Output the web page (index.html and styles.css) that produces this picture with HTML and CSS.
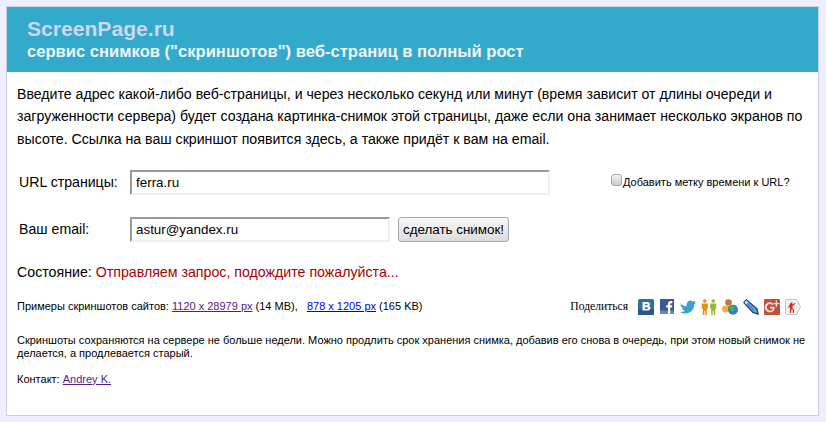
FILE: index.html
```html
<!DOCTYPE html>
<html lang="ru">
<head>
<meta charset="utf-8">
<title>ScreenPage.ru</title>
<link rel="stylesheet" href="styles.css">
</head>
<body>
<main class="card">
  <header class="head">
    <h1 class="logo">ScreenPage.ru</h1>
    <h2 class="tagline">сервис снимков ("скриншотов") веб-страниц в полный рост</h2>
  </header>
  <div class="content">
    <p class="intro">Введите адрес какой-либо веб-страницы, и через несколько секунд или минут (время зависит от длины очереди и загруженности сервера) будет создана картинка-снимок этой страницы, даже если она занимает несколько экранов по высоте. Ссылка на ваш скриншот появится здесь, а также придёт к вам на email.</p>
    <form class="form">
      <div class="row row-url">
        <label class="label" for="url">URL страницы:</label>
        <input class="field field-url" id="url" type="text" value="ferra.ru">
        <label class="stamp"><input class="check" type="checkbox">Добавить метку времени к URL?</label>
      </div>
      <div class="row row-mail">
        <label class="label" for="mail">Ваш email:</label>
        <input class="field field-mail" id="mail" type="text" value="astur@yandex.ru">
        <button class="submit" type="button">сделать снимок!</button>
      </div>
    </form>
    <p class="status">Состояние: <span class="status-msg">Отправляем запрос, подождите пожалуйста...</span></p>
    <div class="examples">
      <p class="small">Примеры скриншотов сайтов: <a class="visited" href="#a">1120 x 28979 px</a> (14 MB), &nbsp; <a class="link" href="#b">878 x 1205 px</a> (165 KB)</p>
      <div class="share">
        <span class="share-label">Поделиться</span>
        <svg class="ic" viewBox="0 0 16 16"><rect width="16" height="16" rx="1.5" fill="#336f9f"/><rect y="10" width="16" height="6" fill="#275a86"/><path d="M4.500 3h5.200C11.300 3 12 4 12 5.200c0 .9-.4 1.500-1 1.800.9.300 1.500 1 1.500 2.100 0 1.500-1 2.400-2.600 2.400H4.500zM7 5v1.300h1.800c.5 0 .8-.2.8-.7S9.300 5 8.800 5zM7 8.200V10h2c.6 0 .9-.3.9-.9s-.3-.9-.9-.9z" fill="#f4f7fa" fill-rule="evenodd"/></svg>
        <svg class="ic" viewBox="0 0 14 16"><rect width="14" height="15" fill="#3b5998"/><rect y="11.500" width="14" height="3.500" fill="#6d84b4"/><path d="M8 15V8.500H6.200V6.200H8V4.800c0-1.900 1.100-2.800 2.800-2.800h1.500v2.300h-1.100c-.8 0-1 .4-1 1v.900h2.100l-.3 2.300h-1.800V15z" fill="#fff"/></svg>
        <svg class="ic" viewBox="0 0 16 16"><path d="M0 4c1.800 2 3.700 3 6.500 3.200C6.400 4 8.200 1.500 10.500 1.500c1 0 1.800.4 2.400 1L15.500 2l-1 2 1.500-.2-1.800 1.900C14 10.500 10.500 14.500 5.500 14.500c-2 0-3.800-.5-5.300-1.500 1.900.1 3.400-.4 4.700-1.600-1.500-.1-2.600-1-3-2.200h1.600C1.500 8.400.5 7.200.5 5.800l1.700.5C.8 5.500.4 5 0 4z" fill="#3f9fd0"/></svg>
        <svg class="ic" viewBox="0 0 16 16"><g fill="#f28c0f"><circle cx="3.800" cy="2" r="1.800"/><path d="M.8 4.500h6v5.200h-1V16H4.300v-4H3.300v4H1.800V9.700H.8z"/></g><g fill="#96b82b"><circle cx="12.200" cy="2" r="1.800"/><path d="M9.200 4.500h6v5.200h-1V16h-1.500v-4h-1v4h-1.500V9.700h-1z"/></g></svg>
        <svg class="ic" viewBox="0 0 16 16"><circle cx="6.500" cy="3.500" r="3.300" fill="#b9793f"/><path d="M2.500 7h8l1 3h-9z" fill="#e8a23a"/><circle cx="3.500" cy="10" r="3.500" fill="#f2b03c"/><circle cx="11" cy="10.700" r="5" fill="#2d7fd0"/><path d="M8 8c1.500-1.500 4-1 4.500.5s-1 4-2.500 4S7 9.500 8 8z" fill="#4db33d"/></svg>
        <svg class="ic" viewBox="0 0 16 16"><path d="M3.500 0 0 3.500 9.500 14 16 16l-1.500-6.500z" fill="#123f6d"/><path d="M3.500 1.500 1.500 3.500l8.800 9.500 3.900 1-1-3.900z" fill="#6da3d8"/><path d="M3.500 1.500 1.500 3.500l1.700 1.800 2-2z" fill="#d6e4f3"/><path d="M4.500 4.500 11.500 12" stroke="#2f6aa5" fill="none"/></svg>
        <svg class="ic" viewBox="0 0 16 16"><rect width="16" height="16" rx="1" fill="#c0503c"/><path transform="translate(-.6 -.9) scale(1.320)" d="M7.600 4.500 6.800 5.300C6.300 4.800 5.700 4.500 5 4.500c-1.400 0-2.400 1.100-2.400 2.500S3.600 9.500 5 9.500c1.200 0 2-.6 2.200-1.700H5V6.600h3.500c.3 2-.8 4.200-3.500 4.200C2.800 10.800 1 9.100 1 7s1.800-3.800 4-3.800c1 0 1.900.4 2.600 1.300z" fill="#f3e2dd"/><path d="M11.700 1.500h1.300v2.500h2.500v1.300H13v2.500h-1.300V5.300H9.500V4h2.200z" fill="#f3e2dd"/></svg>
        <svg class="ic" viewBox="0 0 16 16"><path d="M1.500.5h10L15.500 8l-4 7.500h-10a1 1 0 0 1-1-1v-13a1 1 0 0 1 1-1z" fill="#f1f1f1" stroke="#c4c4c4"/><path d="M6 3.500h1.600L7.300 5.500l2.700-1.500.5.800L7.500 7v2.500l1.500 1V14H7.800v-3L6.500 10 6 14H4.800l.4-7-1.200 2-1-.5L5 5z" fill="#d8261c"/></svg>
      </div>
    </div>
    <p class="small note">Скриншоты сохраняются на сервере не больше недели. Можно продлить срок хранения снимка, добавив его снова в очередь, при этом новый снимок не делается, а продлевается старый.</p>
    <p class="small contact">Контакт: <a class="visited" href="#c">Andrey K.</a></p>
  </div>
</main>
</body>
</html>
```

FILE: styles.css
```css
* { box-sizing: border-box; }
html, body { height: 100%; }
body {
  margin: 0;
  padding: 6px 7px 6px 6px;
  background: #eeeeff;
  font-family: "Liberation Sans", Arial, sans-serif;
  color: #000;
  overflow: hidden;
}
.card {
  height: 410px;
  background: #fff;
  border: 1px solid #cfcfe0;
}
.head {
  height: 65px;
  background: #33a9cc;
  padding: 10px 20px 0;
}
.logo {
  margin: 0;
  font-size: 21.1px;
  line-height: 24px;
  font-weight: bold;
  color: #ccd6ee;
}
.tagline {
  margin: 0;
  font-size: 16.6px;
  line-height: 21px;
  font-weight: bold;
  color: #eef5fa;
}
.content { padding: 11px 10px 0; }
.intro {
  margin: 0;
  font-size: 14.15px;
  line-height: 22.3px;
  color: #000;
}
.form { margin-top: 20px; }
.row { display: flex; align-items: center; height: 25px; }
.row-mail { margin-top: 22px; }
.label {
  width: 113px;
  padding-left: 2px;
  font-size: 14.13px;
  color: #000;
}
.field {
  height: 25px;
  padding: 1px 4px;
  border: 2px solid;
  border-color: #9a9a9a #efefef #efefef #9a9a9a;
  background: #fff;
  font-family: inherit;
  font-size: 13.4px;
  color: #000;
}
.field-url { width: 420px; }
.field-mail { width: 260px; }
.stamp {
  display: flex;
  align-items: center;
  margin-left: 61px;
  font-size: 11px;
  color: #000;
}
.check {
  appearance: none;
  width: 11px;
  height: 12px;
  margin: -5px 1px 0 0;
  border: 1px solid #a6a6a6;
  border-radius: 3px;
  background: linear-gradient(#f4f4f4, #c8c8c8);
}
.submit {
  width: 111px;
  height: 25px;
  margin-left: 8px;
  padding: 0;
  border: 1px solid #a8a8a8;
  border-radius: 3px;
  background: linear-gradient(#f8f8f8, #dcdcdc);
  font-family: inherit;
  font-size: 13.4px;
  color: #000;
}
.status {
  margin: 21px 0 0;
  font-size: 14.2px;
  line-height: 18px;
  color: #000;
}
.status-msg { color: #aa0000; }
.small {
  margin: 0;
  font-size: 11px;
  line-height: 13px;
  color: #000;
}
.examples {
  display: flex;
  justify-content: space-between;
  align-items: center;
  margin-top: 18px;
  height: 16px;
}
.visited { color: #551a8b; }
.link { color: #0000ee; }
.share {
  display: flex;
  align-items: center;
  gap: 5px;
  margin-right: 7px;
}
.share-label {
  margin-right: 5px;
  font-family: "Liberation Serif", serif;
  font-size: 11.6px;
  color: #000;
}
.ic { width: 16px; height: 16px; display: block; }
.note { margin-top: 19px; }
.contact { margin-top: 13px; }
```
